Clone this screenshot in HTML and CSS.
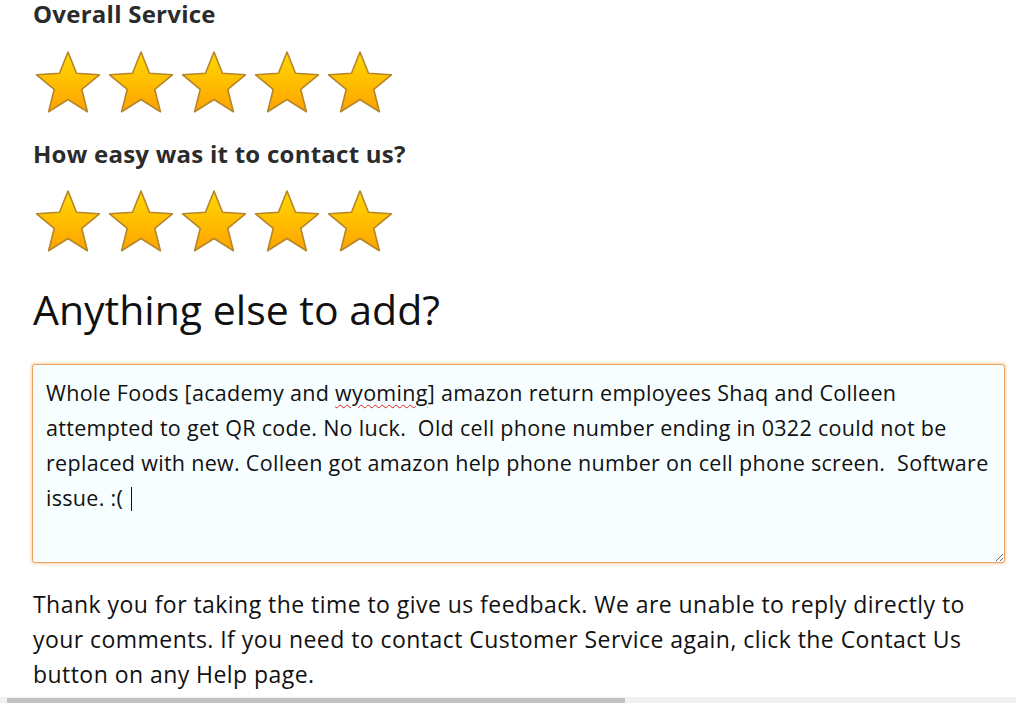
FILE: index.html
```html
<!DOCTYPE html>
<html>
<head>
<meta charset="utf-8">
<link rel="stylesheet" href="styles.css">
</head>
<body>
<svg class="defs" width="0" height="0" aria-hidden="true">
  <defs>
    <linearGradient id="starfill" x1="0" y1="0" x2="0" y2="1">
      <stop offset="0" stop-color="#ffd900"/>
      <stop offset="1" stop-color="#ffa300"/>
    </linearGradient>
    <symbol id="star" viewBox="0 0 70 64">
      <path d="M35 2 L43.52 23.27 L66.39 24.8 L48.79 39.48 L54.4 61.7 L35 49.5 L15.6 61.7 L21.21 39.48 L3.61 24.8 L26.48 23.27 Z" fill="url(#starfill)" stroke="#b5862a" stroke-width="1.6" stroke-linejoin="round"/>
    </symbol>
  </defs>
</svg>
<main class="page">
  <h3 class="question">Overall Service</h3>
  <div class="stars stars-first">
    <svg class="star" width="70" height="64"><use href="#star"/></svg>
    <svg class="star" width="70" height="64"><use href="#star"/></svg>
    <svg class="star" width="70" height="64"><use href="#star"/></svg>
    <svg class="star" width="70" height="64"><use href="#star"/></svg>
    <svg class="star" width="70" height="64"><use href="#star"/></svg>
  </div>
  <h3 class="question question-second">How easy was it to contact us?</h3>
  <div class="stars">
    <svg class="star" width="70" height="64"><use href="#star"/></svg>
    <svg class="star" width="70" height="64"><use href="#star"/></svg>
    <svg class="star" width="70" height="64"><use href="#star"/></svg>
    <svg class="star" width="70" height="64"><use href="#star"/></svg>
    <svg class="star" width="70" height="64"><use href="#star"/></svg>
  </div>
  <h2 class="add-title">Anything else to add?</h2>
  <div class="comment" role="textbox" aria-multiline="true">Whole Foods [academy and <span class="misspelled">wyoming</span>] amazon return employees Shaq and Colleen attempted to get QR code. No luck.&nbsp; Old cell phone number ending in 0322 could not be replaced with new. Colleen got amazon help phone number on cell phone screen.&nbsp; Software issue. :( <span class="caret"></span></div>
  <p class="thanks">Thank you for taking the time to give us feedback. We are unable to reply directly to your comments. If you need to contact Customer Service again, click the Contact Us button on any Help page.</p>
</main>
<div class="hscroll"><div class="hscroll-thumb"></div></div>
</body>
</html>
```
FILE: styles.css
```css
html, body {
  margin: 0;
  padding: 0;
  background: #fff;
}
body {
  font-family: "Open Sans", "Noto Sans", sans-serif;
  color: #111;
  overflow: hidden;
  height: 703px;
}
.defs {
  position: absolute;
  width: 0;
  height: 0;
}
.page {
  padding: 0 0 0 33px;
}
.question {
  margin: 0;
  font-size: 24px;
  line-height: 28px;
  letter-spacing: 0.25px;
  font-weight: 700;
  color: #2b2b2b;
}
.question-second {
  margin-top: 26px;
}
.stars {
  display: flex;
  gap: 3px;
  margin-top: 21px;
  height: 64px;
}
.stars-first {
  margin-top: 22px;
}
.star {
  display: block;
  width: 70px;
  height: 64px;
}
.add-title {
  margin: 31px 0 0;
  font-size: 41px;
  line-height: 50px;
  font-weight: 400;
  color: #111;
}
.comment {
  box-sizing: border-box;
  margin-top: 30px;
  width: 973px;
  height: 199px;
  margin-left: -1px;
  padding: 10px 8px 0 13px;
  border: 1px solid #eaa35e;
  border-radius: 3px;
  background: #f7feff;
  box-shadow: 0 0 3px 1px rgba(240, 160, 80, 0.45);
  font-size: 21.5px;
  line-height: 35px;
  letter-spacing: 0.3px;
  color: #111;
  resize: vertical;
  overflow: hidden;
}
.misspelled {
  text-decoration: underline wavy #e0201c;
  text-decoration-thickness: 1px;
  text-underline-offset: 3px;
}
.caret {
  display: inline-block;
  width: 1px;
  height: 24px;
  background: #111;
  vertical-align: -5px;
  margin-left: 2px;
}
.thanks {
  margin: 24px 0 0;
  font-size: 23px;
  line-height: 35px;
  letter-spacing: 0.45px;
  color: #111;
}
.hscroll {
  margin-top: 5px;
  height: 6px;
  background: #f1f1f1;
  display: flex;
  padding-left: 7px;
}
.hscroll-thumb {
  width: 618px;
  margin-top: 1px;
  background: #c1c1c1;
}
```
